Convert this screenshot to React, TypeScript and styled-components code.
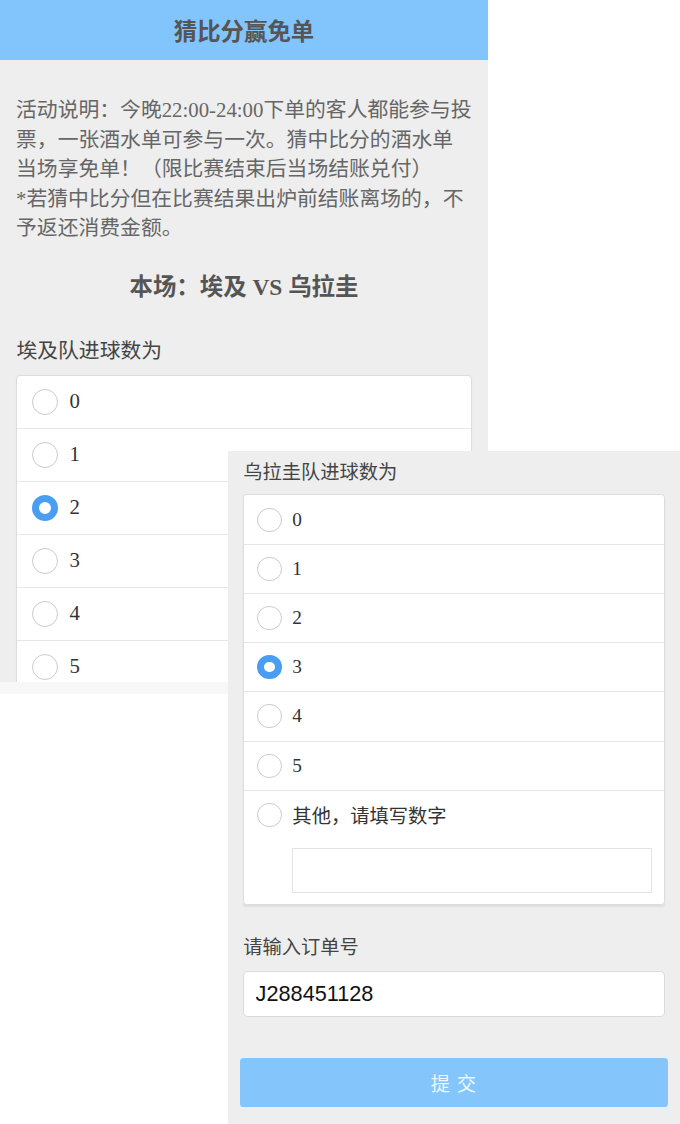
import React from 'react';
import styled, { createGlobalStyle } from 'styled-components';

const GlobalStyle = createGlobalStyle`
  html, body {
    margin: 0;
    padding: 0;
    background: #ffffff;
  }
  body {
    font-family: "Liberation Serif", "Noto Sans CJK SC", serif;
  }
`;

const Canvas = styled.div`
  position: relative;
  width: 680px;
  height: 1124px;
  overflow: hidden;
  background: #ffffff;
`;

// each phone capture sits on the canvas at its own place
const Capture = styled.div<{ $x: number; $y: number; $w: number; $h: number; $fade?: boolean }>`
  position: absolute;
  left: ${({ $x }) => $x}px;
  top: ${({ $y }) => $y}px;
  width: ${({ $w }) => $w}px;
  height: ${({ $h }) => $h}px;
  overflow: hidden;
  background: #eeeeee;
  ${({ $fade }) => ($fade ? 'box-shadow: 0 12px 0 #f7f7f7;' : '')}
`;

const Screen = styled.div<{ $scale: number; $top?: number }>`
  zoom: ${({ $scale }) => $scale};
  width: 375px;
  padding-top: ${({ $top }) => $top ?? 0}px;
  background: #eeeeee;
  color: #333;
`;

const Header = styled.header`
  height: 46px;
  display: flex;
  align-items: center;
  justify-content: center;
  background: #82c4fc;
  color: #555;
  font-family: "Noto Sans CJK SC", sans-serif;
  font-size: 18px;
  font-weight: 700;
`;

const Intro = styled.p`
  margin: 0;
  padding: 28px 6px 0 12.3px;
  font-size: 16px;
  line-height: 22.7px;
  color: #666;
`;

const Match = styled.h2`
  margin: 21px 0 0;
  text-align: center;
  font-size: 18px;
  line-height: 26px;
  font-weight: 700;
  color: #555;
`;

const Section = styled.section<{ $gap: number }>`
  margin-top: ${({ $gap }) => $gap}px;
  padding: 0 12.6px;
`;

const Label = styled.div`
  font-family: "Noto Sans CJK SC", sans-serif;
  font-size: 16px;
  line-height: 22.7px;
  color: #444;
`;

const Card = styled.div`
  margin-top: 7.4px;
  background: #fff;
  border: 1px solid #dcdcdc;
  border-radius: 3px;
  box-shadow: 0 1px 1px rgba(0, 0, 0, 0.06);
`;

const Row = styled.div`
  padding: 0 10px 0 11px;
  & + & {
    border-top: 1px solid #e6e6e6;
  }
`;

const Line = styled.div`
  display: flex;
  align-items: center;
  gap: 9px;
  height: 40px;
  font-size: 16px;
`;

const Radio = styled.span<{ $on?: boolean }>`
  box-sizing: border-box;
  flex: none;
  width: 20px;
  height: 20px;
  border-radius: 50%;
  background: #fff;
  border: ${({ $on }) => ($on ? '6px solid #4a9ef1' : '1px solid #cbcbcb')};
`;

const Option = styled.span<{ $cjk?: boolean }>`
  color: #333;
  ${({ $cjk }) => ($cjk ? 'font-family: "Noto Sans CJK SC", sans-serif;' : '')}
`;

const OtherBox = styled.div`
  box-sizing: border-box;
  height: 37.3px;
  margin: 7.2px 0 9.8px 29px;
  border: 1px solid #e3e3e3;
  background: #fff;
`;

const OrderInput = styled.input`
  display: block;
  box-sizing: border-box;
  width: 100%;
  height: 38.2px;
  margin-top: 9.5px;
  padding: 0 9.5px;
  border: 1px solid #dadada;
  border-radius: 4px;
  background: #fff;
  font-family: "Liberation Sans", Arial, sans-serif;
  font-size: 18px;
  color: #111;
  outline: none;
`;

const Submit = styled.button`
  display: block;
  box-sizing: border-box;
  width: calc(100% + 5px);
  height: 40.7px;
  margin: 34px -2.5px 0;
  border: none;
  border-radius: 3px;
  background: #84c5fc;
  color: rgba(255, 255, 255, 0.88);
  font-family: "Noto Sans CJK SC", sans-serif;
  font-size: 16px;
  letter-spacing: 1px;
`;

const goals = ['0', '1', '2', '3', '4', '5'];

type QuestionProps = { label: string; picked: string; gap: number; other?: boolean };

function Question({ label, picked, gap, other }: QuestionProps) {
  return (
    <Section $gap={gap}>
      <Label>{label}</Label>
      <Card>
        {goals.map((g) => (
          <Row key={g}>
            <Line>
              <Radio $on={g === picked} />
              <Option>{g}</Option>
            </Line>
          </Row>
        ))}
        {other && (
          <Row>
            <Line>
              <Radio />
              <Option $cjk>其他，请填写数字</Option>
            </Line>
            <OtherBox />
          </Row>
        )}
      </Card>
    </Section>
  );
}

export default function App() {
  return (
    <Canvas>
      <GlobalStyle />
      <Capture $x={0} $y={0} $w={488} $h={682} $fade>
        <Screen $scale={1.3013}>
          <Header>猜比分赢免单</Header>
          <Intro>
            活动说明：今晚22:00-24:00下单的客人都能参与投<br />
            票，一张酒水单可参与一次。猜中比分的酒水单<br />
            当场享免单！（限比赛结束后当场结账兑付）<br />
            *若猜中比分但在比赛结果出炉前结账离场的，不<br />
            予返还消费金额。
          </Intro>
          <Match>本场：埃及 VS 乌拉圭</Match>
          <Question label="埃及队进球数为" picked="2" gap={23.3} />
        </Screen>
      </Capture>
      <Capture $x={228} $y={451} $w={452} $h={673}>
        <Screen $scale={1.2053} $top={6}>
          <Question label="乌拉圭队进球数为" picked="3" gap={0} other />
          <Section $gap={22.6}>
            <Label>请输入订单号</Label>
            <OrderInput defaultValue="J288451128" readOnly />
            <Submit type="button">提 交</Submit>
          </Section>
        </Screen>
      </Capture>
    </Canvas>
  );
}
